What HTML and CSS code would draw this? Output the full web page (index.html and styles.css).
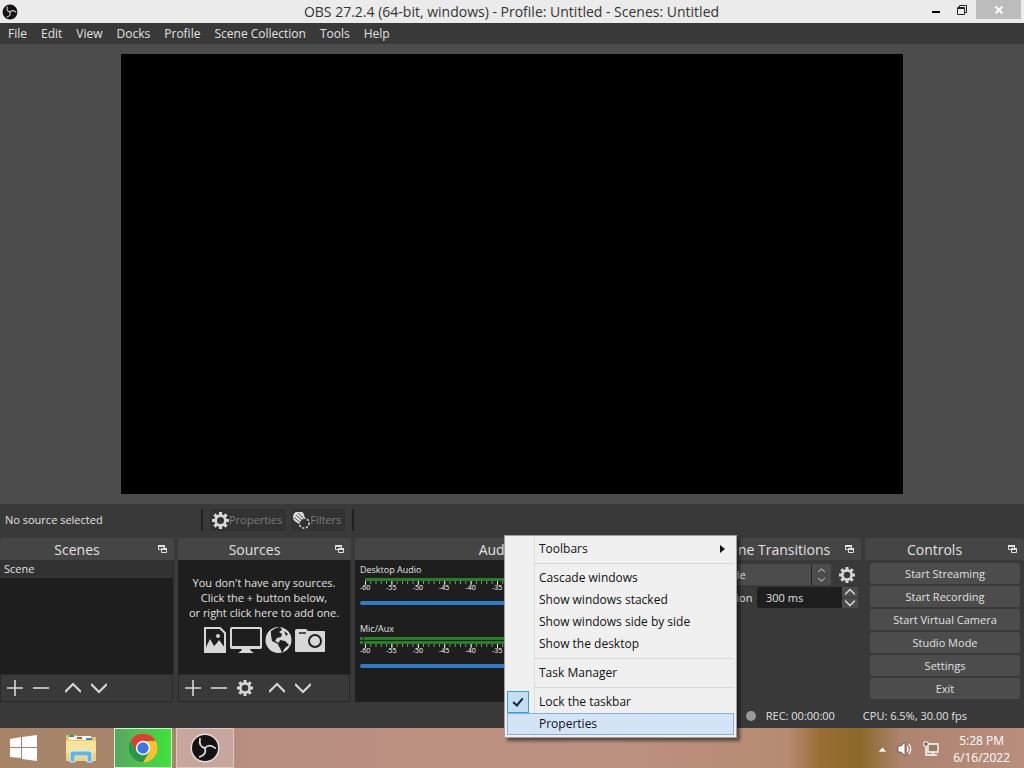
FILE: index.html
```html
<!DOCTYPE html>
<html lang="en">
<head>
  <meta charset="UTF-8" />
  <meta name="viewport" content="width=device-width, initial-scale=1.0"/>
  <title>OBS 27.2.4</title>
  <link rel="stylesheet" href="styles.css">
</head>
<body>
  <svg class="sprite" aria-hidden="true">
    <symbol id="obs" viewBox="0 0 28 28">
      <circle cx="14" cy="14" r="13" fill="#141212"/>
      <g fill="none" stroke="#dcd8d8" stroke-width="1.8" stroke-linecap="round">
        <path d="M14 14 Q7.500 12.500 9 5"/>
        <path d="M14 14 Q7.500 12.500 9 5" transform="rotate(120 14 14)"/>
        <path d="M14 14 Q7.500 12.500 9 5" transform="rotate(240 14 14)"/>
      </g>
    </symbol>
    <symbol id="gear" viewBox="0 0 16 16">
      <circle cx="8" cy="8" r="4.6" fill="none" stroke="currentColor" stroke-width="2.600"/>
      <path fill="none" stroke="currentColor" stroke-width="3" d="M8 0v3M8 13v3M0 8h3M13 8h3M2.3 2.3l2 2M11.7 11.7l2 2M2.3 13.7l2-2M11.7 4.3l2-2"/>
    </symbol>
    <symbol id="plus" viewBox="0 0 16 16"><path fill="none" stroke="currentColor" stroke-width="1.6" d="M8 0v16M0 8h16"/></symbol>
    <symbol id="minus" viewBox="0 0 16 16"><path fill="none" stroke="currentColor" stroke-width="1.6" d="M0 8h16"/></symbol>
    <symbol id="up" viewBox="0 0 16 16"><path fill="none" stroke="currentColor" stroke-width="2.2" d="M0 12l8-8 8 8"/></symbol>
    <symbol id="down" viewBox="0 0 16 16"><path fill="none" stroke="currentColor" stroke-width="2.2" d="M0 4l8 8 8-8"/></symbol>
    <symbol id="float" viewBox="0 0 9 8">
      <path fill="none" stroke="currentColor" d="M6.500 3V.5h-6v4H3"/><path fill="currentColor" d="M0 0h7v2H0zM3 3h6v2H3z"/>
      <path fill="none" stroke="currentColor" d="M3.500 3.500h5v4h-5z"/>
    </symbol>
  </svg>

  <header class="titlebar">
    <svg class="app-icon"><use href="#obs"/></svg>
    <h1>OBS 27.2.4 (64-bit, windows) - Profile: Untitled - Scenes: Untitled</h1>
    <div class="window-buttons">
      <button aria-label="Minimize"><svg viewBox="0 0 10 10"><path d="M1 6h8v2H1z"/></svg></button>
      <button aria-label="Restore"><svg viewBox="0 0 10 10"><path fill="none" stroke="#222" d="M2.500 2V.5h7v7H8M.5 2.500h7v7h-7zM.5 3.500h7"/></svg></button>
      <button class="close" aria-label="Close"><svg viewBox="0 0 10 10"><path fill="none" stroke="#fff" stroke-width="2" d="M1.500 1.500l7 7M8.500 1.500l-7 7"/></svg></button>
    </div>
  </header>

  <nav class="menubar">
    <button>File</button>
    <button>Edit</button>
    <button>View</button>
    <button>Docks</button>
    <button>Profile</button>
    <button>Scene Collection</button>
    <button>Tools</button>
    <button>Help</button>
  </nav>

  <main class="preview"><div class="canvas"></div></main>

  <div class="source-bar">
    <span class="source-name">No source selected</span>
    <div class="source-actions">
      <button disabled><svg><use href="#gear"/></svg>Properties</button>
      <button disabled>
        <svg viewBox="0 0 16 16">
          <circle cx="10.500" cy="10.500" r="4.700" fill="none" stroke="currentColor" stroke-width="1.400" stroke-dasharray="2 1.500"/>
          <path fill="currentColor" d="M0 5a5.500 5.500 0 0 1 10.500-2.500L11 6q-4 1-5 5Q0 9 0 5z"/>
          <path stroke="#333" stroke-width=".7" d="M1 5l6 5M3 3l6 5M5 1l5 5"/>
        </svg>Filters
      </button>
    </div>
  </div>

  <div class="docks">
    <section class="dock">
      <header><h2>Scenes</h2><button aria-label="Float Scenes"><svg><use href="#float"/></svg></button></header>
      <ul class="list"><li>Scene</li></ul>
      <div class="toolbar">
        <button aria-label="Add scene"><svg><use href="#plus"/></svg></button>
        <button aria-label="Remove scene"><svg><use href="#minus"/></svg></button>
        <button class="spaced" aria-label="Move scene up"><svg><use href="#up"/></svg></button>
        <button aria-label="Move scene down"><svg><use href="#down"/></svg></button>
      </div>
    </section>

    <section class="dock">
      <header><h2>Sources</h2><button aria-label="Float Sources"><svg><use href="#float"/></svg></button></header>
      <div class="list empty">
        <p>You don't have any sources.<br>Click the + button below,<br>or right click here to add one.</p>
        <div class="source-icons">
          <svg width="24" height="28" viewBox="0 0 24 28">
            <path fill="none" stroke="currentColor" stroke-width="2" d="M2 2h15l5 5v19H2z"/>
            <path fill="currentColor" d="M2 25l2-6 3-6 4 7 3-3 2-3 6 8v4H2z"/><circle cx="15" cy="10" r="2" fill="currentColor"/>
          </svg>
          <svg width="32" height="28" viewBox="0 0 32 28">
            <rect x="1" y="2" width="30" height="20" rx="1" fill="none" stroke="currentColor" stroke-width="2"/>
            <path fill="currentColor" d="M1 20h30v3H1zM12 23h8l1 2 3 2H8l3-2z"/>
          </svg>
          <svg width="27" height="28" viewBox="0 0 27 28">
            <circle cx="13.500" cy="14" r="13" fill="currentColor"/>
            <path fill="#1f1f1f" d="M6 5l5-3 4-1 2 3-3 2 3 2-1 3-4 1-2 3 4 2-1 1-6-3-1-6zM15 14l5 1 4 4-4 3-3 5-2-5-2-3zM19 5l4 3-2 2z"/>
          </svg>
          <svg width="31" height="28" viewBox="0 0 31 28">
            <path fill="currentColor" d="M2 3h9l2 2h16q1 0 1 1v19q0 1-1 1H1q-1 0-1-1V5q0-2 2-2z"/>
            <path stroke="#1f1f1f" stroke-width="1.500" d="M4 7h7"/><circle cx="20" cy="15" r="6" fill="none" stroke="#1f1f1f" stroke-width="2"/>
          </svg>
        </div>
      </div>
      <div class="toolbar">
        <button aria-label="Add source"><svg><use href="#plus"/></svg></button>
        <button aria-label="Remove source"><svg><use href="#minus"/></svg></button>
        <button aria-label="Source properties"><svg><use href="#gear"/></svg></button>
        <button class="spaced" aria-label="Move source up"><svg><use href="#up"/></svg></button>
        <button aria-label="Move source down"><svg><use href="#down"/></svg></button>
      </div>
    </section>

    <section class="dock">
      <header><h2>Audio Mixer</h2><button aria-label="Float Audio Mixer"><svg><use href="#float"/></svg></button></header>
      <div class="mixer">
        <div class="channel">
          <label for="desktopVol">Desktop Audio</label>
          <div class="meter"></div>
          <div class="scale"></div>
          <input type="range" id="desktopVol" min="0" max="100" value="100">
        </div>
        <div class="channel mic">
          <label for="micVol">Mic/Aux</label>
          <div class="meter"></div>
          <div class="scale"></div>
          <input type="range" id="micVol" min="0" max="100" value="100">
        </div>
      </div>
    </section>

    <section class="dock">
      <header><h2>Scene Transitions</h2><button aria-label="Float Scene Transitions"><svg><use href="#float"/></svg></button></header>
      <div class="transitions">
        <div class="row">
          <div class="select-wrap">
            <select aria-label="Transition"><option>Fade</option><option>Cut</option></select>
            <span class="arrows"><svg><use href="#up"/></svg><svg><use href="#down"/></svg></span>
          </div>
          <button class="gear" aria-label="Transition properties"><svg><use href="#gear"/></svg></button>
        </div>
        <div class="row">
          <label for="duration">Duration</label>
          <input type="text" id="duration" value="300 ms">
          <span class="spin">
            <button aria-label="Increase duration"><svg><use href="#up"/></svg></button>
            <button aria-label="Decrease duration"><svg><use href="#down"/></svg></button>
          </span>
        </div>
      </div>
    </section>

    <section class="dock">
      <header><h2>Controls</h2><button aria-label="Float Controls"><svg><use href="#float"/></svg></button></header>
      <div class="controls">
        <button>Start Streaming</button>
        <button>Start Recording</button>
        <button>Start Virtual Camera</button>
        <button>Studio Mode</button>
        <button>Settings</button>
        <button>Exit</button>
      </div>
    </section>
  </div>

  <div class="statusbar">
    <span class="rec">REC: 00:00:00</span>
    <span class="cpu">CPU: 6.5%, 30.00 fps</span>
  </div>

  <footer class="taskbar">
    <button class="start" aria-label="Start">
      <svg width="28" height="26" viewBox="0 0 28 26"><path fill="#fff" d="M0 4l11-2v10H0zM12 2l15-2v12H12zM0 13h11v10L0 22zM12 13h15v13l-15-2z"/></svg>
    </button>
    <button class="task" aria-label="File Explorer">
      <svg width="32" height="30" viewBox="0 0 32 30">
        <path fill="#e9c865" d="M1 3q0-1 1-1h9l2 2h17q1 0 1 1v22H1z"/>
        <path fill="#fff" d="M4 3h22v4H4z"/><path fill="#3a9b49" d="M4 2h5v2H4z"/><path fill="#d2503c" d="M12 4h5v2h-5z"/><path fill="#3c88cc" d="M21 5h6v2h-6z"/>
        <path fill="#f7e49b" d="M1 8h30v19H1z"/><path fill="#efd37a" d="M1 20h30v8H1z"/>
        <path fill="#67b4e4" stroke="#d3effc" d="M5 29V21q0-3 3-3h16q3 0 3 3v8h-5v-6H10v6z"/>
      </svg>
    </button>
    <button class="task chrome" aria-label="Google Chrome">
      <svg width="30" height="30" viewBox="0 0 30 30">
        <circle cx="15" cy="15" r="14.500" fill="#f9c22d"/>
        <path fill="#dc4033" d="M2.400 7.800A14.500 14.500 0 0 1 27.600 7.800L15 8l-6.500 10.500z"/>
        <path fill="#27984a" d="M2.400 7.800A14.500 14.500 0 0 0 15 29.500l6.300-11L15 22l-6-3.500z"/>
        <circle cx="15" cy="15" r="7.200" fill="#fff"/><circle cx="15" cy="15" r="5.700" fill="#3b78e7"/>
      </svg>
    </button>
    <button class="task active" aria-label="OBS Studio">
      <svg width="30" height="30" viewBox="0 0 30 30"><circle cx="15" cy="15" r="14.500" fill="#e4dcdc"/><use href="#obs" x="1" y="1" width="28" height="28"/></svg>
    </button>
    <div class="tray">
      <svg width="9" height="5" viewBox="0 0 9 5"><path fill="#fff" stroke="#5f4a3c" stroke-width=".5" d="M0 5l4.500-5L9 5z"/></svg>
      <svg width="16" height="16" viewBox="0 0 16 16">
        <path fill="#fff" stroke="#4c3c33" stroke-width=".7" d="M1 5h3l4-4v14l-4-4H1z"/>
        <path fill="none" stroke="#fff" stroke-width="1.300" d="M10 5q2 3 0 6M12 3q3.500 5 0 10"/>
      </svg>
      <svg width="16" height="16" viewBox="0 0 16 16">
        <path fill="#9b7a68" stroke="#fff" stroke-width="1.300" d="M5 3h10v8H5z"/>
        <path fill="none" stroke="#fff" stroke-width="1.500" d="M10 11v3M6 14h8M3 6v8h3"/><path fill="#6b5548" stroke="#fff" d="M1 1h4v4H1z"/>
      </svg>
      <div class="clock">5:28 PM<br>6/16/2022</div>
    </div>
  </footer>

  <ul class="context-menu">
    <li><button>Toolbars<span class="submenu"></span></button></li>
    <li class="sep"></li>
    <li><button>Cascade windows</button></li>
    <li><button>Show windows stacked</button></li>
    <li><button>Show windows side by side</button></li>
    <li><button>Show the desktop</button></li>
    <li class="sep"></li>
    <li><button>Task Manager</button></li>
    <li class="sep"></li>
    <li><label class="check"><input type="checkbox" checked>Lock the taskbar</label></li>
    <li><button class="hover">Properties</button></li>
  </ul>

  <script>
    // dB labels under each meter, -60 to 0
    document.querySelectorAll('.scale').forEach(scale => {
      for (let db = -60; db <= 0; db += 5) {
        const mark = document.createElement('span');
        mark.textContent = db;
        scale.appendChild(mark);
      }
    });
  </script>
</body>
</html>
```
FILE: styles.css
```css
* { box-sizing: border-box; }
body { margin: 0; height: 100vh; display: flex; flex-direction: column; overflow: hidden; background: #3a393a; color: #e1e0e1; font: 12px/16px "Open Sans", "Noto Sans", sans-serif; }
button, input, select { font: inherit; color: inherit; }
button { background: none; border: none; padding: 0; }
ul { list-style: none; margin: 0; padding: 0; }
h1, h2, p { margin: 0; font-weight: normal; }
svg { display: block; }
.sprite { position: absolute; width: 0; height: 0; }

.titlebar { display: flex; align-items: center; height: 23px; flex: none; background: #ebebeb; color: #333; }
.app-icon { width: 16px; height: 16px; margin-left: 2px; }
.titlebar h1 { flex: 1; text-align: center; font-size: 14px; line-height: 22px; padding-left: 82px; }
.window-buttons { display: flex; align-self: flex-start; }
.window-buttons button { width: 26px; height: 19px; display: flex; align-items: center; justify-content: center; }
.window-buttons svg { width: 10px; height: 10px; }
.window-buttons .close { width: 45px; background: #bcbcbc; margin: 0 3px 0 1px; }

.menubar { display: flex; flex: none; height: 21px; gap: 14px; padding-left: 8px; align-items: center; }

.preview { flex: 1; min-height: 0; padding: 10px; background: #4c4c4c; display: flex; justify-content: center; }
.canvas { height: 100%; aspect-ratio: 16 / 9; background: #000; }

.source-bar { display: flex; align-items: center; flex: none; height: 34px; padding: 0 5px 2px; font-size: 11px; }
.source-name { width: 196px; }
.source-actions { display: flex; gap: 5px; padding: 0 7px; border-left: 2px solid #222; border-right: 2px solid #222; }
.source-actions button { display: flex; align-items: center; height: 22px; padding: 0 4px 0 2px; background: #333233; color: #7c7b7c; border-radius: 2px; }
.source-actions svg { width: 17px; height: 17px; color: #d8d7d8; }

.docks { display: grid; flex: none; grid-template-columns: 174fr 173fr 346fr 156fr 159fr; gap: 4px; }
.dock { display: flex; flex-direction: column; min-width: 0; }
.dock header { display: flex; align-items: center; height: 22px; background: #464546; border-radius: 3px 3px 0 0; }
.dock h2 { flex: 1; text-align: center; font-size: 14px; line-height: 20px; padding-top: 2px; white-space: nowrap; }
.dock header button { width: 20px; padding-right: 4px; }
.dock header svg { width: 9px; height: 8px; margin: 0 auto; }

.list { flex: 1; background: #1f1e1f; border-right: 1px solid #2c2b2c; font-size: 11px; }
.list li { height: 18px; padding-left: 4px; line-height: 18px; background: #333233; }
.empty { text-align: center; padding-top: 15px; line-height: 15px; }
.source-icons { display: flex; justify-content: center; gap: 3px; margin-top: 6px; color: #d8d7d8; }
.toolbar { display: flex; align-items: center; height: 28px; gap: 10px; margin-right: 1px; padding-left: 6px; border: 1px solid #2a292a; color: #d8d7d8; }
.toolbar svg { width: 16px; height: 16px; }
.toolbar .spaced { margin-left: 6px; }

.mixer { flex: 1; background: #1f1e1f; padding: 2px 5px; }
.channel { height: 59px; font-size: 9px; }
.channel label { display: block; line-height: 16px; }
.meter { height: 3px; margin: 0 14px 0 5px; background: #267f26; }
.mic .meter { height: 7px; margin-left: 0; background: linear-gradient(#1f1e1f, #1f1e1f) 3px 0 / 1px 100% no-repeat, linear-gradient(#267f26 3px, #1f1e1f 3px, #1f1e1f 4px, #267f26 4px); }
.scale { display: flex; justify-content: space-between; margin: 0 14px 0 5px; height: 15px; font-size: 7px; line-height: 8px; padding-top: 3px; color: #fff; background: linear-gradient(to right, #eee 1px, transparent 1px) 0 0 / calc(100% / 12) 4px repeat-x, linear-gradient(to right, #999 1px, transparent 1px) 0 0 / calc(100% / 60) 3px repeat-x; }
.scale span { width: 0; display: flex; justify-content: center; }
.channel input { appearance: none; display: block; width: 100%; height: 4px; margin: 5px 0 0; background: #2f7bc8; border-radius: 2px; }
.channel input::-webkit-slider-thumb { appearance: none; width: 10px; height: 14px; background: #d2d2d2; border-radius: 2px; }

.transitions { padding: 4px 3px 0 2px; display: flex; flex-direction: column; gap: 2px; font-size: 11px; }
.row { display: flex; align-items: center; }
.select-wrap { display: flex; flex: 1; height: 21px; background: #4c4c4c; border-radius: 2px; }
.select-wrap select { appearance: none; flex: 1; min-width: 0; border: none; padding: 0 14px; background: none; }
.arrows { width: 20px; display: flex; flex-direction: column; align-items: center; justify-content: center; gap: 2px; border-left: 1px solid #222; }
.arrows svg { width: 7px; height: 7px; }
.gear { margin: 0 3px 0 8px; }
.gear svg { width: 16px; height: 16px; color: #d8d7d8; }
.row label { width: 50px; }
.row input { flex: 1; min-width: 0; height: 21px; border: none; padding: 0 9px; background: #1f1e1f; border-radius: 3px 0 0 3px; }
.spin { display: flex; flex-direction: column; gap: 1px; }
.spin button { width: 16px; height: 10px; background: #4c4c4c; }
.spin svg { width: 10px; height: 10px; margin: 0 auto; }

.controls { display: flex; flex-direction: column; gap: 2px; padding: 3px 4px 3px 5px; font-size: 11px; }
.controls button { height: 21px; line-height: 21px; background: #4c4c4c; border-radius: 2px; }

.statusbar { display: flex; flex: none; justify-content: flex-end; align-items: center; height: 26px; padding: 2px 57px 0 0; font-size: 11px; }
.rec::before { content: ""; display: inline-block; width: 10px; height: 10px; margin-right: 10px; border-radius: 50%; background: #999; vertical-align: -1px; }
.cpu { margin-left: 28px; }

.taskbar { display: flex; flex: none; height: 40px; gap: 4px; color: #fff; background: linear-gradient(to right, #a58468, #a8866e 17%, #b98f82 24%, #bd9180 60%, #b78a72 77%, #9a6f35 80%, #8b6929 84%, #ad8470 88%, #b98e7c); }
.taskbar button { display: flex; align-items: center; justify-content: center; }
.start { width: 48px; }
.task { width: 58px; }
.taskbar .chrome { border: 1px solid #d6f0cf; background: linear-gradient(to right, #58a765, #3fe23a); }
.taskbar .active { border: 1px solid #dcc8c0; background: #c7a79d; }
.tray { display: flex; align-items: center; gap: 10px; margin-left: auto; padding: 2px 14px 0 0; }
.clock { text-align: center; line-height: 17px; margin-left: 4px; }

.context-menu { position: absolute; left: 504px; bottom: 30px; width: 233px; padding: 2px 2px; border: 1px solid #a0a0a0; background: linear-gradient(to right, transparent 29px, #dcdcdc 29px, #dcdcdc 30px, transparent 30px) #f0f0f0; color: #111; box-shadow: 3px 3px 3px rgba(0,0,0,0.5); }
.context-menu button, .check { display: flex; align-items: center; width: 100%; height: 22px; padding-left: 31px; border: 1px solid transparent; position: relative; }
.sep { height: 1px; margin: 3px 0 3px 28px; background: #d7d7d7; }
.submenu { margin: 0 8px 0 auto; border: 4px solid transparent; border-left: 5px solid #111; border-right: 0; }
.check input { appearance: none; position: absolute; left: -1px; top: -1px; width: 22px; height: 22px; margin: 0; border: 1px solid #3d9fc9; background: #c3def0; }
.check input::after { content: ""; position: absolute; left: 7px; top: 4px; width: 4px; height: 8px; border: solid #15233b; border-width: 0 2px 2px 0; transform: rotate(40deg); }
.context-menu .hover { border-color: #86aede; background: #d3e4f6; }
```
